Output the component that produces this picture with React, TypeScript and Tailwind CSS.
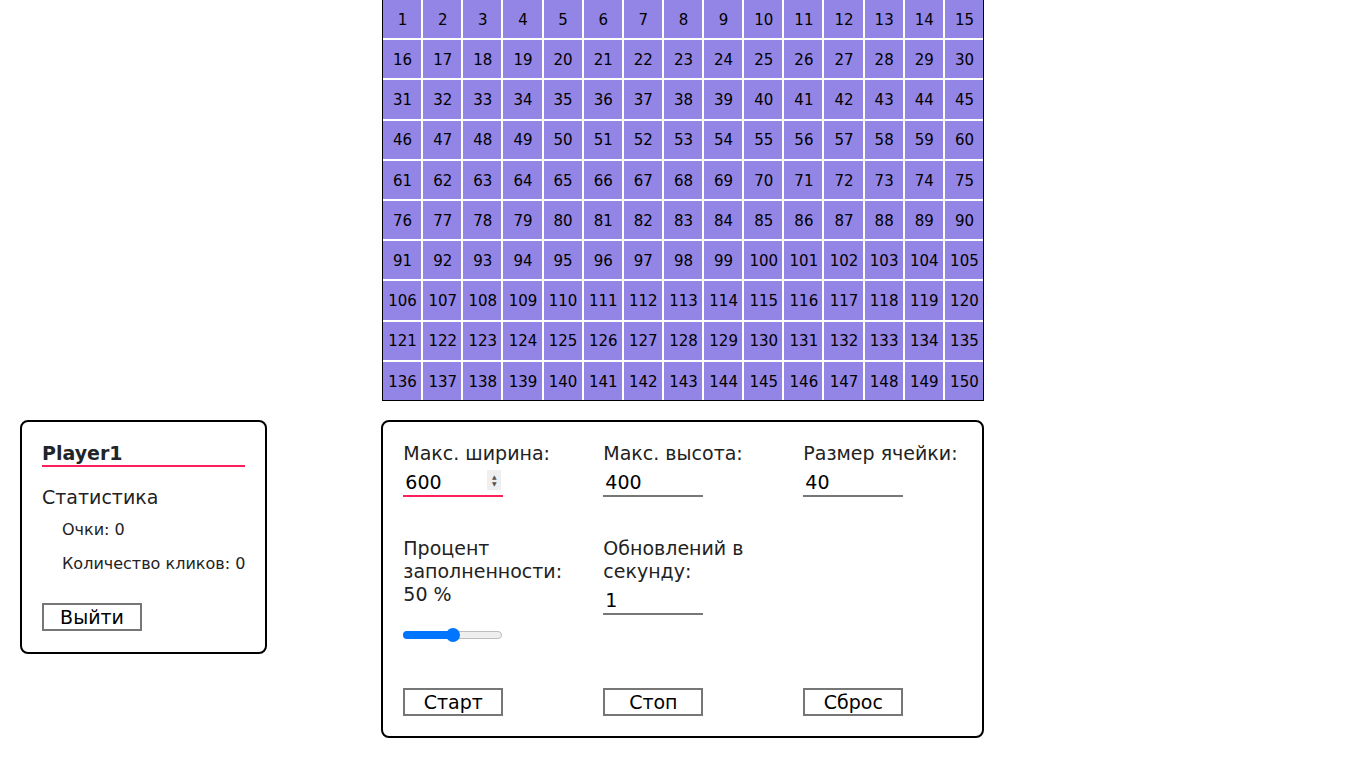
import React, { useState } from 'react';

const COLS = 15;
const ROWS = 10;

const Cell: React.FC<{ n: number }> = ({ n }) => (
  <div className="flex items-center justify-center bg-[#9385e5] pt-[2px] pl-[1px] text-[15px] text-black">
    {n}
  </div>
);

const Field: React.FC<{ label: React.ReactNode; value: string; focused?: boolean }> = ({ label, value, focused }) => (
  <div className="flex w-[200px] shrink-0 flex-col">
    <div className="w-[180px] text-[19px] leading-[23px] text-[#222]">{label}</div>
    <div
      className={
        'relative mt-[4px] flex h-[28px] w-[100px] items-center border-b-2 pl-[2px] text-[19px] text-black ' +
        (focused ? 'border-[#ff1f5b]' : 'border-[#777]')
      }
    >
      {value}
      {focused && (
        <span className="absolute right-[2px] top-[1px] flex h-[20px] w-[14px] flex-col items-center justify-center bg-[#efefef] text-[6px] leading-[7px] text-[#555]">
          <span>▲</span>
          <span>▼</span>
        </span>
      )}
    </div>
  </div>
);

const Btn: React.FC<{ children: React.ReactNode }> = ({ children }) => (
  <button className="flex h-[28px] w-[100px] items-center justify-center border-2 border-[#767676] bg-white text-[19px] leading-none text-black">
    {children}
  </button>
);

export default function App() {
  const [fill] = useState(50);
  const cells = Array.from({ length: COLS * ROWS }, (_, i) => i + 1);

  return (
    <div className="min-h-[759px] w-[1366px] bg-white font-['DejaVu_Sans',sans-serif]">
      {/* board */}
      <div className="flex justify-center">
        <div className="w-[602px] border-x border-b border-black">
          <div className="grid h-[400px] grid-cols-15 grid-rows-10 gap-[2px] bg-white">
            {cells.map((n) => (
              <Cell key={n} n={n} />
            ))}
          </div>
        </div>
      </div>

      <div className="mt-[19px] flex items-start">
        {/* player card */}
        <div className="ml-[20px] w-fit whitespace-nowrap rounded-lg border-2 border-black px-[20px] pt-[20px] pb-[21px]">
          <div className="border-b-2 border-[#ff1f5b] text-[19px] font-bold leading-[23px] text-[#212529]">Player1</div>
          <div className="mt-[19px] text-[19px] leading-[23px] text-[#222]">Статистика</div>
          <div className="mt-[11px] pl-[20px] text-[16px] leading-[19px] text-[#222]">Очки: 0</div>
          <div className="mt-[15px] pl-[20px] text-[16px] leading-[19px] text-[#222]">Количество кликов: 0</div>
          <div className="mt-[30px]">
            <Btn>Выйти</Btn>
          </div>
        </div>

        {/* settings */}
        <div className="ml-[114px] w-[603px] rounded-lg border-2 border-black p-[20px]">
          <div className="flex">
            <Field label="Макс. ширина:" value="600" focused />
            <Field label="Макс. высота:" value="400" />
            <Field label="Размер ячейки:" value="40" />
          </div>

          <div className="mt-[40px] flex h-[151px]">
            <div className="flex w-[200px] shrink-0 flex-col">
              <div className="w-[180px] text-[19px] leading-[23px] text-[#222]">
                Процент заполненности:
                <br />
                {fill} %
              </div>
              <div className="relative mt-[21px] h-[16px] w-[100px]">
                <div className="absolute left-0 top-[4px] h-[8px] w-[99px] rounded-full border border-[#bdbdbd] bg-[#efefef]" />
                <div className="absolute left-0 top-[4px] h-[8px] w-[50px] rounded-full bg-[#0075ff]" />
                <div className="absolute left-[43px] top-[1px] h-[14px] w-[14px] rounded-full bg-[#0075ff]" />
              </div>
            </div>
            <Field label="Обновлений в секунду:" value="1" />
          </div>

          <div className="flex">
            <div className="w-[200px] shrink-0">
              <Btn>Старт</Btn>
            </div>
            <div className="w-[200px] shrink-0">
              <Btn>Стоп</Btn>
            </div>
            <div className="w-[200px] shrink-0">
              <Btn>Сброс</Btn>
            </div>
          </div>
        </div>
      </div>
    </div>
  );
}
